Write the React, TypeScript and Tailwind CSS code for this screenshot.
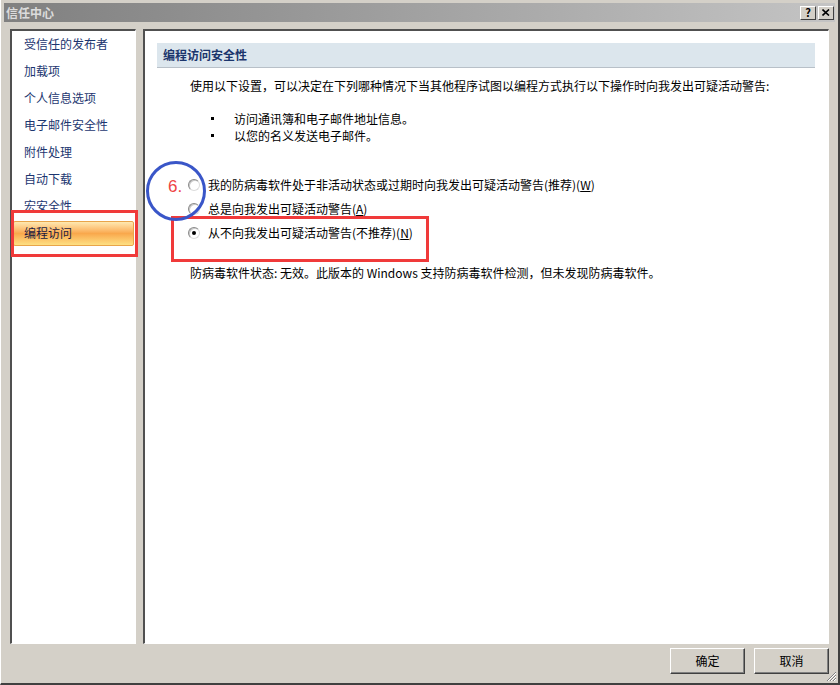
const menu = [
  "受信任的发布者",
  "加载项",
  "个人信息选项",
  "电子邮件安全性",
  "附件处理",
  "自动下载",
  "宏安全性",
]

function Radio({ checked = false }: { checked?: boolean }) {
  return (
    <span className="flex h-[12px] w-[12px] shrink-0 items-center justify-center rounded-full border border-t-[#8a8a8a] border-l-[#8a8a8a] border-b-[#dcdcdc] border-r-[#dcdcdc] bg-white shadow-[inset_1px_1px_0_#c8c8c8]">
      {checked && <span className="h-[4px] w-[4px] rounded-full bg-black" />}
    </span>
  )
}

function WinButton({ children }: { children: React.ReactNode }) {
  return (
    <button className="flex h-[26px] w-[75px] items-center justify-center border border-t-white border-l-white border-b-[#404040] border-r-[#404040] bg-[#d4d0c8] text-[12px] text-black shadow-[inset_-1px_-1px_0_#808080]">
      {children}
    </button>
  )
}

export default function App() {
  return (
    <div className="relative h-[685px] w-[840px] overflow-hidden border-l border-r-2 border-b-2 border-l-white border-r-[#404040] border-b-[#404040] bg-[#d4d0c8] font-['Noto_Sans_CJK_SC',sans-serif] text-[12px] text-black">
      {/* title bar */}
      <div className="mx-[3px] mt-[3px] flex h-[19px] items-center justify-between bg-linear-to-r from-[#808080] to-[#c4c4c4] pl-[2px] pr-[1px]">
        <span className="text-[12px] font-bold leading-none text-[#dcdcdc]">信任中心</span>
        <div className="flex gap-[2px]">
          <span className="flex h-[14px] w-[16px] items-center justify-center border border-t-white border-l-white border-b-[#404040] border-r-[#404040] bg-[#d4d0c8] text-[11px] font-bold leading-none">
            ?
          </span>
          <span className="flex h-[14px] w-[16px] items-center justify-center border border-t-white border-l-white border-b-[#404040] border-r-[#404040] bg-[#d4d0c8]">
            <svg width="8" height="7" viewBox="0 0 8 7">
              <path d="M0.5 0.5 L7 6.5 M7 0.5 L0.5 6.5" stroke="#000" strokeWidth="1.6" />
            </svg>
          </span>
        </div>
      </div>

      {/* panels */}
      <div className="flex gap-[7px] px-[9px] pt-[7px]">
        <div className="h-[615px] w-[126px] border-t-2 border-l-2 border-b border-r border-t-[#505050] border-l-[#505050] border-b-white border-r-white bg-white pt-[1px]">
          {menu.map((m) => (
            <div key={m} className="flex h-[27px] items-center pb-[3px] pl-[12px] text-[#1c3670]">
              {m}
            </div>
          ))}
          <div className="mx-[1px] flex h-[25px] items-center rounded-[2px] border border-[#e9a54a] bg-linear-to-b from-[#fee8b0] via-[#f9a84c] to-[#fde083] pb-[1px] pl-[10px] text-[#1a1a40]">
            编程访问
          </div>
        </div>

        <div className="flex h-[615px] w-[686px] flex-col border-t-2 border-l-2 border-b border-r border-t-[#505050] border-l-[#505050] border-b-white border-r-white bg-white">
          <div className="mx-[12px] mr-[13px] mt-[12px] flex h-[25px] items-center border-b border-[#b8c0c8] bg-[#dce6ed] pl-[6px] font-bold text-[#1b356c]">
            编程访问安全性
          </div>

          <p className="mt-[10px] pl-[45px] leading-[16px]">
            使用以下设置，可以决定在下列哪种情况下当其他程序试图以编程方式执行以下操作时向我发出可疑活动警告:
          </p>

          <ul className="mt-[16px] pl-[66px] leading-[17px]">
            <li className="flex items-center">
              <span className="mr-[20px] h-[3px] w-[3px] bg-black" />访问通讯簿和电子邮件地址信息。
            </li>
            <li className="flex items-center">
              <span className="mr-[20px] h-[3px] w-[3px] bg-black" />以您的名义发送电子邮件。
            </li>
          </ul>

          <div className="mt-[29px] flex flex-col pl-[43px]">
            <label className="flex h-[24px] items-center gap-[8px]">
              <Radio />
              <span>
                我的防病毒软件处于非活动状态或过期时向我发出可疑活动警告(推荐)(<span className="underline">W</span>)
              </span>
            </label>
            <label className="flex h-[24px] items-center gap-[8px]">
              <Radio />
              <span>
                总是向我发出可疑活动警告(<span className="underline">A</span>)
              </span>
            </label>
            <label className="flex h-[24px] items-center gap-[8px]">
              <Radio checked />
              <span>
                从不向我发出可疑活动警告(不推荐)(<span className="underline">N</span>)
              </span>
            </label>
          </div>

          <p className="mt-[20px] pl-[45px] leading-[16px]">
            防病毒软件状态: 无效。此版本的 Windows 支持防病毒软件检测，但未发现防病毒软件。
          </p>
        </div>
      </div>

      {/* buttons */}
      <div className="mt-[4px] flex justify-end gap-[9px] pr-[9px]">
        <WinButton>确定</WinButton>
        <WinButton>取消</WinButton>
      </div>

      {/* size grip */}
      <svg className="absolute bottom-[1px] right-[1px]" width="12" height="12" viewBox="0 0 12 12">
        <path d="M11 2 L2 11 M11 5 L5 11 M11 8 L8 11" stroke="#808080" strokeWidth="1" />
        <path d="M11 3 L3 11 M11 6 L6 11 M11 9 L9 11" stroke="#ffffff" strokeWidth="1" />
      </svg>

      {/* annotations */}
      <div className="pointer-events-none absolute left-[10px] top-[210px] h-[47px] w-[127px] border-[3px] border-[#f03a3a]" />
      <div className="pointer-events-none absolute left-[170px] top-[216px] h-[46px] w-[258px] border-[3px] border-[#f03a3a]" />
      <div className="pointer-events-none absolute left-[145px] top-[161px] h-[60px] w-[60px] rounded-full border-[3px] border-[#3a56c8]" />
      <span className="absolute left-[167px] top-[177px] font-['Liberation_Sans',sans-serif] text-[17px] leading-[20px] text-[#ee4444]">
        6.
      </span>
    </div>
  )
}
